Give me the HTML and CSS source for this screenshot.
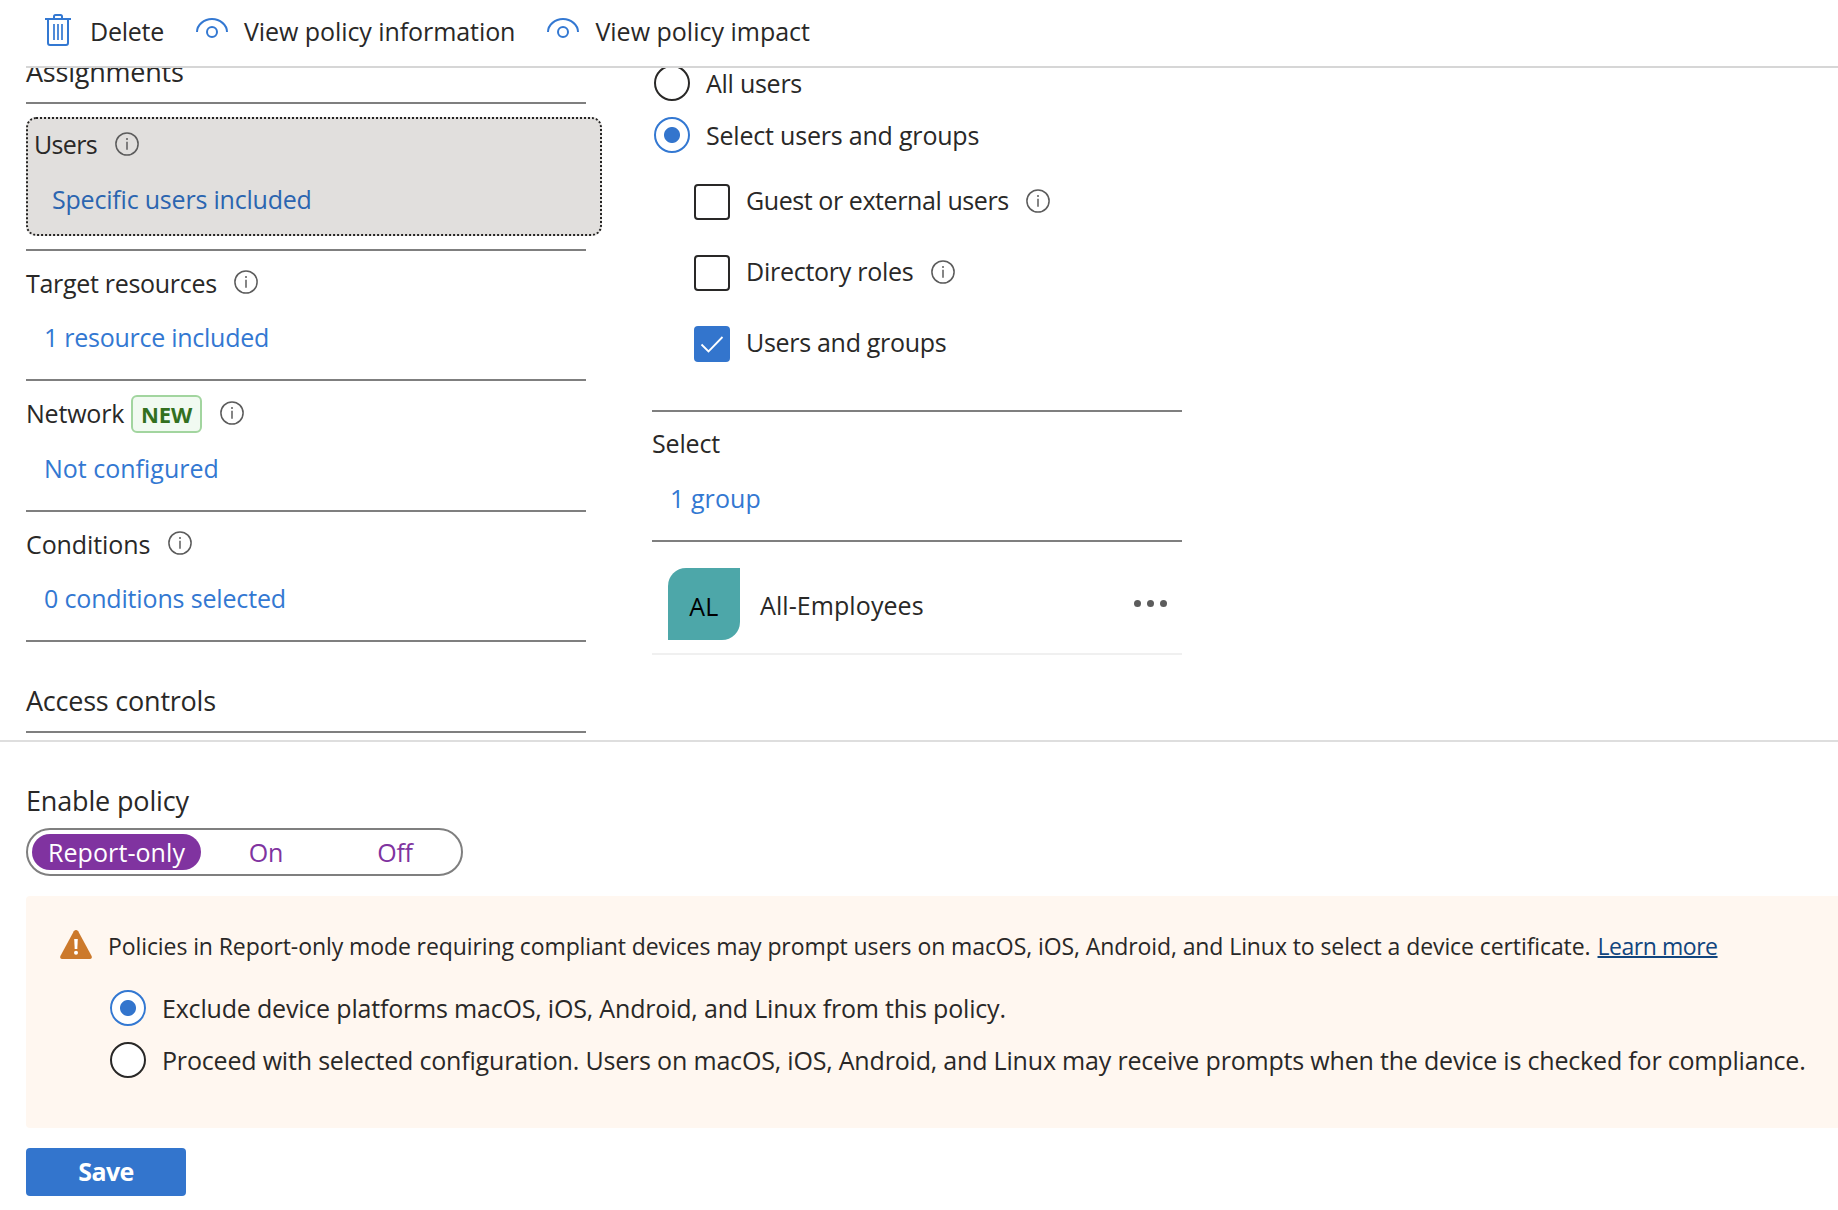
FILE: index.html
```html
<!DOCTYPE html>
<html lang="en">
<head>
<meta charset="utf-8">
<title>Conditional Access policy</title>
<link rel="stylesheet" href="styles.css">
</head>
<body>
<svg class="sprite" aria-hidden="true">
  <symbol id="info" viewBox="0 0 24 24"><circle cx="12" cy="12" r="11.1" fill="none" stroke="#5c5c5c" stroke-width="1.5"/><path d="M12 9.7v8" stroke="#5c5c5c" stroke-width="1.5"/><circle cx="12" cy="6.9" r="1" fill="#5c5c5c"/></symbol>
  <symbol id="eye" viewBox="0 0 32 22"><path d="M1 14C1 7 8 1 16 1s15 6 15 13" fill="none" stroke="#3378d2" stroke-width="2"/><circle cx="16" cy="14" r="5" fill="none" stroke="#3378d2" stroke-width="2"/></symbol>
</svg>
<header class="toolbar">
  <button class="command command-delete"><svg class="trash" viewBox="0 0 26 32"><g fill="none" stroke="#3378d2" stroke-width="2"><path d="M0 5h26"/><path d="M9 5V2.500Q9 1 10.500 1h5Q17 1 17 2.500V5"/><path d="M3 5v24q0 2 2 2h16q2 0 2-2V5" /><path d="M9 10v16M13 10v16M17 10v16" stroke-width="1.700"/></g></svg><span class="t t-delete">Delete</span></button>
  <button class="command"><svg class="eye"><use href="#eye"/></svg><span class="t t-view-info">View policy information</span></button>
  <button class="command"><svg class="eye"><use href="#eye"/></svg><span class="t">View policy impact</span></button>
</header>
<main class="content">
  <nav class="nav">
    <h2 class="heading heading-first"><span class="t t-assign">Assignments</span></h2>
    <section class="selected">
      <div class="label"><span class="t t-users">Users</span><svg class="info"><use href="#info"/></svg></div>
      <a class="link"><span class="t t-specific">Specific users included</span></a>
    </section>
    <section class="item item-flat">
      <div class="label label-raised"><span class="t t-target">Target resources</span><svg class="info"><use href="#info"/></svg></div>
      <a class="link"><span class="t t-resource">1 resource included</span></a>
    </section>
    <section class="item">
      <div class="label"><span class="t t-network">Network</span><span class="badge">NEW</span><svg class="info"><use href="#info"/></svg></div>
      <a class="link link-low"><span class="t">Not configured</span></a>
    </section>
    <section class="item">
      <div class="label label-raised"><span class="t t-cond">Conditions</span><svg class="info"><use href="#info"/></svg></div>
      <a class="link"><span class="t t-zero">0 conditions selected</span></a>
    </section>
    <h2 class="heading heading-access"><span class="t t-access">Access controls</span></h2>
  </nav>
  <div class="panel">
    <div class="radios">
      <label class="option"><i class="radio"></i><span class="t t-all">All users</span></label>
      <label class="option"><i class="radio on"></i><span class="t t-select">Select users and groups</span></label>
    </div>
    <div class="checks">
      <label class="check"><i class="box"></i><span class="t t-guest">Guest or external users</span><svg class="info"><use href="#info"/></svg></label>
      <label class="check"><i class="box"></i><span class="t t-roles">Directory roles</span><svg class="info"><use href="#info"/></svg></label>
      <label class="check"><i class="box checked"><svg viewBox="0 0 36 36"><path d="M7.500 18.500l7 7L28.500 11" fill="none" stroke="#fff" stroke-width="1.800"/></svg></i><span class="t t-ug">Users and groups</span></label>
    </div>
    <section class="picker">
      <div class="label"><span class="t t-sel">Select</span></div>
      <a class="link link-low"><span class="t t-group">1 group</span></a>
    </section>
    <div class="member">
      <div class="avatar"><span class="t t-al">AL</span></div>
      <span class="t t-emp">All-Employees</span>
      <div class="more"><i></i><i></i><i></i></div>
    </div>
  </div>
</main>
<footer class="footer">
  <h2 class="enable"><span class="t t-enable">Enable policy</span></h2>
  <div class="toggle">
    <button class="choice active"><span class="t t-report">Report-only</span></button>
    <button class="choice"><span class="t t-on">On</span></button>
    <button class="choice choice-off"><span class="t t-off">Off</span></button>
  </div>
  <div class="notice">
    <div class="message">
      <svg class="warning" viewBox="0 0 32 29"><path d="M13.800 1.300Q16-1.200 18.200 1.300L31.600 26Q32.400 29 29.500 29h-27Q-.4 29 .4 26z" fill="#cc792b"/><path d="M14.200 9h3.600l-.5 10h-2.600z" fill="#fff"/><circle cx="16" cy="22.700" r="2" fill="#fff"/></svg>
      <span class="t t-policies">Policies in Report-only mode requiring compliant devices may prompt users on macOS, iOS, Android, and Linux to select a device certificate.</span><a class="learn t">Learn more</a>
    </div>
    <label class="option"><i class="radio on"></i><span class="t t-exclude">Exclude device platforms macOS, iOS, Android, and Linux from this policy.</span></label>
    <label class="option"><i class="radio"></i><span class="t t-exclude">Proceed with selected configuration. Users on macOS, iOS, Android, and Linux may receive prompts when the device is checked for compliance.</span></label>
  </div>
  <button class="save">Save</button>
</footer>
</body>
</html>
```
FILE: styles.css
```css
* { box-sizing: border-box; }
body {
  margin: 0;
  width: 1838px;
  height: 1210px;
  overflow: hidden;
  background: #fff;
  color: #292827;
  font: 25px/36px "Open Sans", "Noto Sans", sans-serif;
}
button { margin: 0; padding: 0; border: 0; background: none; color: inherit; font: inherit; }
h2 { margin: 0; font-size: 27px; font-weight: 400; }
.t { white-space: nowrap; }
.sprite { display: none; }
svg { display: block; flex: none; }

/* Tracking per label */
.t-delete, .t-off { letter-spacing: -.25px; }
.t-view-info { letter-spacing: -.07px; }
.t-assign, .t-access { letter-spacing: -.22px; }
.t-users { letter-spacing: -.65px; }
.t-specific, .t-network, .t-select { letter-spacing: -.2px; }
.t-target, .t-ug { letter-spacing: -.3px; }
.t-resource, .t-roles, .t-all { letter-spacing: -.26px; }
.t-cond, .t-on { letter-spacing: -.1px; }
.t-zero, .t-sel, .t-enable { letter-spacing: -.16px; }
.t-guest { letter-spacing: -.42px; }
.t-group, .t-emp, .t-report { letter-spacing: .08px; }
.t-al { letter-spacing: .3px; }
.t-policies { letter-spacing: -.09px; }
.t-exclude { letter-spacing: -.186px; }

.toolbar {
  display: flex;
  height: 68px;
  margin-left: 26px;
  padding: 13px 0 0 19px;
  gap: 32px;
  border-bottom: 2px solid #d6d6d6;
}
.command { display: flex; gap: 16px; height: 36px; }
.command-delete { gap: 19px; }
.trash { width: 26px; height: 32px; margin-top: 1px; }
.eye { width: 32px; height: 22px; margin-top: 5px; }

.content {
  display: grid;
  grid-template-columns: 576px 530px;
  column-gap: 50px;
  height: 672px;
  padding-left: 26px;
  overflow: hidden;
}
.heading { width: 560px; padding-bottom: 12px; border-bottom: 2px solid #7f7f7f; }
.heading-first { margin-top: -14px; }
.heading-access { margin-top: 41px; }
.selected {
  height: 119px;
  margin: 13px 0;
  padding: 7px 0 0 6px;
  border: 2px dotted #252423;
  border-radius: 10px;
  background: #e1dfdd;
}
.selected .link { margin-top: 19px; color: #2b65b0; }
.item { width: 560px; padding: 14px 0 24px; border-bottom: 2px solid #7f7f7f; }
.item-flat { border-top: 2px solid #7f7f7f; }
.label { display: flex; align-items: center; height: 36px; }
.info { width: 24px; height: 24px; margin-left: 17.5px; }
.label-raised .info { margin-bottom: 2px; }
.link { display: block; margin-top: 18px; padding-left: 18px; color: #3378d2; }
.link-low { margin-top: 19px; }
.badge {
  width: 71px;
  height: 38px;
  margin: 2px 0 0 7px;
  border: 2px solid #a2d59f;
  border-radius: 6px;
  background: #f1faf1;
  color: #33701f;
  font-size: 22px;
  font-weight: 700;
  line-height: 34px;
  text-align: center;
}

.radios { display: grid; row-gap: 16px; margin-top: -3px; padding-left: 2px; }
.option { display: flex; gap: 16px; height: 36px; }
.radio { display: block; flex: none; width: 36px; height: 36px; border: 2px solid #292827; border-radius: 50%; background: #fff; }
.radio.on { border-color: #3378d2; background: radial-gradient(circle, #3375cd 7.500px, #fff 8.500px); }
.checks { display: grid; row-gap: 35px; padding: 31px 0 48px 42px; }
.check { display: flex; height: 36px; line-height: 32px; }
.box { width: 36px; height: 36px; margin-right: 16px; border: 2px solid #292827; border-radius: 4px; }
.box.checked { border: 0; background: #3375cd; }
.check .info { margin-top: 5px; }
.picker { padding: 13px 0 24px; border-top: 2px solid #7f7f7f; border-bottom: 2px solid #7f7f7f; }
.member { display: flex; align-items: center; height: 113px; padding: 26px 15px 13px 16px; border-bottom: 2px solid #f0f0f0; }
.avatar { width: 72px; height: 72px; margin-right: 20px; padding-top: 20px; border-radius: 18px 0; background: #4da7a9; color: #000; text-align: center; }
.t-emp { padding-top: 2px; }
.more { display: flex; gap: 6px; margin-left: auto; padding-bottom: 2px; }
.more i { width: 7px; height: 7px; border-radius: 50%; background: #5c5c5c; }

.footer { height: 470px; padding: 41px 0 0 26px; border-top: 2px solid #dedede; }
.enable { height: 45px; }
.toggle { display: flex; align-items: center; width: 437px; height: 48px; padding-left: 4px; border: 2px solid #7f7f7f; border-radius: 24px; color: #8033a0; }
.choice { width: 130px; height: 36px; border-radius: 18px; line-height: 34px; }
.choice-off { width: 128px; }
.choice.active { width: 169px; background: #8033a0; color: #fff; }
.notice { height: 232px; margin-top: 20px; padding: 32px 0 0 34px; border-radius: 4px 0 0 4px; background: #fff7f0; }
.message { display: flex; height: 62px; font-size: 23px; }
.warning { width: 32px; height: 29px; margin: 2px 16px 0 0; }
.learn { margin-left: 7px; color: #11457e; letter-spacing: -.46px; text-decoration: underline; text-decoration-thickness: 2px; }
.notice .option { margin: 0 0 16px 50px; }
.save { display: block; width: 160px; height: 48px; margin-top: 20px; padding-bottom: 2px; border-radius: 4px; background: #3375cd; color: #fff; font-weight: 700; letter-spacing: -.6px; }
```
